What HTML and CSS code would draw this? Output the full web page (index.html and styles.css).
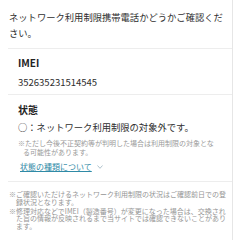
FILE: index.html
```html
<!DOCTYPE html>
<html lang="ja">
<head>
    <meta charset="UTF-8">
    <meta name="viewport" content="width=device-width, initial-scale=1.0">
    <title>ネットワーク利用制限携帯電話確認</title>
    <link rel="stylesheet" href="styles.css">
</head>
<body>
    <div class="page">
        <p class="lead">ネットワーク利用制限携帯電話かどうかご確認ください。</p>

        <div class="section imei">
            <div class="label">IMEI</div>
            <div class="value">352635231514545</div>
        </div>

        <div class="section status">
            <div class="label">状態</div>
            <div class="result">○：ネットワーク利用制限の対象外です。</div>
            <p class="note">※ただし今後不正契約等が判明した場合は利用制限の対象となる可能性があります。</p>
            <div class="more-row">
                <a class="more" href="#">状態の種類について</a>
                <svg class="chevron" width="6" height="4" viewBox="0 0 6 4">
                    <polyline points="0.5,0.5 3,3.3 5.5,0.5" fill="none" stroke="#9ab4c0" stroke-width="0.8"/>
                </svg>
            </div>
        </div>

        <div class="notes">
            <p>※ご確認いただけるネットワーク利用制限の状況はご確認前日での登録状況となります。</p>
            <p>※修理対応などでIMEI（製造番号）が変更になった場合は、交換された旨の情報が反映されるまで当サイトでは確認できないことがあります。</p>
        </div>
    </div>
</body>
</html>
```

FILE: styles.css
```css
/* page de base */
body {
    margin: 0;
    background: #fff;
    font-family: "Noto Sans CJK JP", "Noto Sans", sans-serif;
    color: #2e2e2e;
}

.page {
    width: 232px;
    min-height: 240px;
    border-right: 1px solid #e6e6e6; /* ligne verticale à droite */
}

.lead {
    margin: 0 0 0 8px;
    padding: 9px 4px 7px 1px;
    font-size: 9.3px;
    line-height: 16px;
    border-bottom: 1px solid #ededed;
}

/* blocs IMEI / état */
.section {
    margin-left: 8px;
    padding: 7px 14px 4px 10px;
    border-bottom: 1px solid #ededed;
}

.label {
    font-size: 10px;
    font-weight: bold;
    line-height: 14px;
    color: #222;
}

.value {
    margin-top: 4px;
    font-size: 9.5px;
    line-height: 16px;
}

.status {
    padding-top: 8px;
    padding-bottom: 8px;
}

.result {
    margin-top: 2px;
    font-size: 9.3px;
    line-height: 16px;
}

.note {
    margin: 4px 0 0;
    padding-left: 5px;
    text-indent: -5px;
    font-size: 7px;
    line-height: 8.5px;
    color: #9a9a9a;
}

.more-row {
    margin-top: 5px;
    padding-left: 2px;
    font-size: 8px;
    line-height: 12px;
}

.more {
    color: #2f8aa6;
    text-decoration: underline;
}

.chevron {
    margin-left: 3px;
    vertical-align: 1px;
}

/* notes du bas */
.notes {
    margin-left: 8px;
    padding: 9px 2px 0 8px;
    font-size: 7px;
    line-height: 7.6px;
    color: #959595;
}

.notes p {
    margin: 0 0 1.4px;
    text-indent: -7px;
}
```
